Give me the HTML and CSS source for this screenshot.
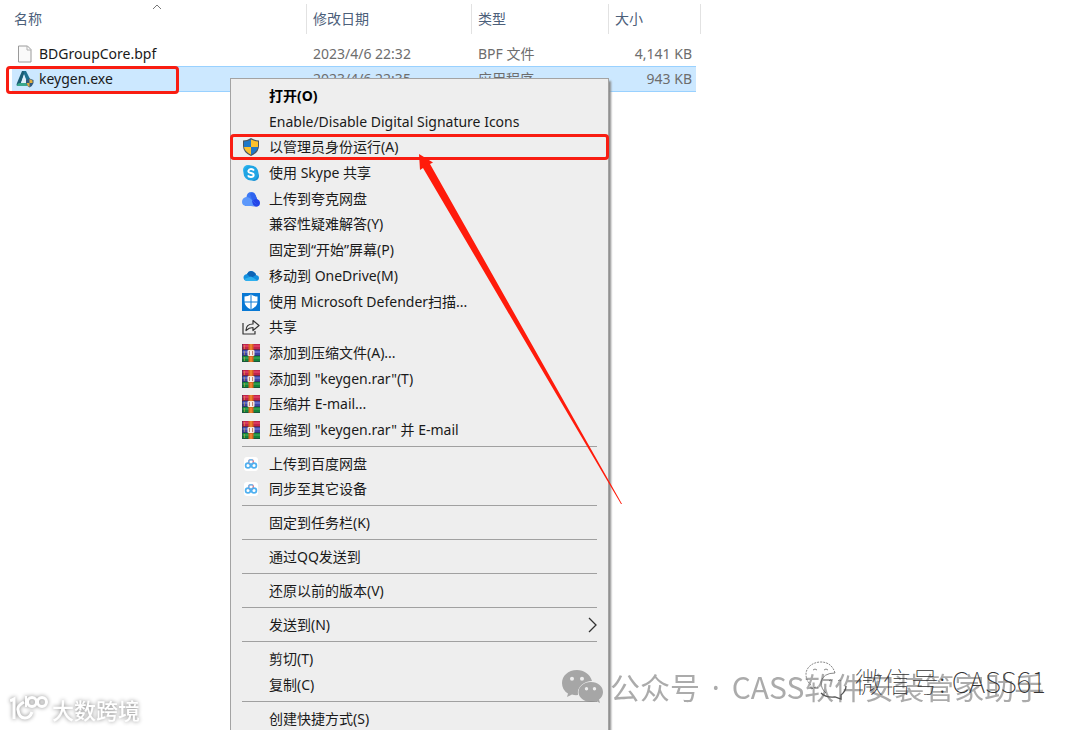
FILE: index.html
```html
<!DOCTYPE html>
<html lang="zh-CN">
<head>
<meta charset="utf-8">
<meta name="viewport" content="width=device-width, initial-scale=1">
<title>keygen.exe</title>
<link rel="stylesheet" href="styles.css">
</head>
<body>
<svg class="defs" aria-hidden="true">
  <defs>
    <symbol id="rar" viewBox="0 0 18 18">
      <rect width="18" height="6" fill="#c2244c"/><rect y="1" width="18" height="2" fill="#d83a62"/>
      <rect y="6" width="18" height="6" fill="#3c46a4"/><rect y="7" width="18" height="2" fill="#5d69c8"/>
      <rect y="12" width="18" height="6" fill="#12853a"/><rect y="13" width="18" height="2" fill="#2f9c50"/>
      <path d="M0 5.500h18M0 11.500h18M0 17.500h18M.5 0v18" stroke="#222b3c" stroke-width="1" opacity=".5"/>
      <path d="M2.500 1v4M2.500 7v4M2.500 13v4" stroke="#e8b23a" opacity=".5"/>
      <rect x="6.500" width="5" height="18" fill="#d9651f"/><path d="M9 0v6M9 13v5" stroke="#f08a35" stroke-width="1.500"/>
      <rect x="5.500" y="6" width="7" height="6" rx="1" fill="#f4e4d6"/><path d="M7.500 7v4M10.500 7v4" stroke="#c58474"/><path d="M9 7v5" stroke="#fff"/>
    </symbol>
    <symbol id="baidu" viewBox="0 0 18 18">
      <rect x="2" y="2" width="14" height="14" rx="3" fill="#fff"/>
      <circle cx="9" cy="7" r="2.400" fill="none" stroke="#ec7b85" stroke-width="1.400"/>
      <path d="M6.600 7A2.400 2.400 0 0 1 11 5.700" fill="none" stroke="#6bbcf2" stroke-width="1.400"/>
      <circle cx="6" cy="10.500" r="2.400" fill="none" stroke="#4fb0f0" stroke-width="1.700"/>
      <circle cx="12" cy="10.500" r="2.400" fill="none" stroke="#4fb0f0" stroke-width="1.700"/>
    </symbol>
  </defs>
</svg>

<main class="stage">
  <table class="files">
    <colgroup><col class="c-name"><col class="c-date"><col class="c-type"><col class="c-size"><col class="c-edge"></colgroup>
    <thead>
      <tr>
        <th class="sorted">名称<svg class="caret" viewBox="0 0 10 6" aria-hidden="true"><path d="M1 5l4-4 4 4" fill="none" stroke="#777"/></svg></th>
        <th>修改日期</th><th>类型</th><th colspan="2">大小</th>
      </tr>
    </thead>
    <tbody>
      <tr>
        <td><span class="file"><svg class="fileicon" viewBox="0 0 18 18" aria-hidden="true"><path d="M2.500 1h9l3.500 3.500V17H2.500z" fill="#fafafa" stroke="#9a9a9a"/><path d="M11 1v4h4" fill="none" stroke="#b0b0b0"/></svg>BDGroupCore.bpf</span></td>
        <td>2023/4/6 22:32</td><td>BPF 文件</td><td class="size">4,141 KB</td><td></td>
      </tr>
      <tr class="selected">
        <td><span class="file"><svg class="fileicon" viewBox="0 0 18 18" aria-hidden="true"><path d="M6 1h3L5 13l-4 3q-1-1 0-3z" fill="#1b5d75"/><path d="M7.500 1H10l5 10-4 1L8 4z" fill="#1d6f8e"/><path d="M1 16q0-3 3-3h7v3z" fill="#3aa88c"/><path d="M8 5l3 8H5z" fill="#dff0fa"/><path d="M10 10l3.500-1.500L17.500 10v3q-1 3-4 4.500Q11 16 10 13z" fill="#31597e"/><path d="M13.500 9l3 1.500V13h-3zM10.500 13h3v4q-2-1-3-4" fill="#e1ad3b"/></svg>keygen.exe</span><span class="mark mark-file"></span></td>
        <td>2023/4/6 22:35</td><td>应用程序</td><td class="size">943 KB</td><td class="edge"></td>
      </tr>
    </tbody>
  </table>

  <nav class="menu" aria-label="右键菜单">
    <div class="group group-main">
      <button class="item default">打开(O)</button>
      <button class="item">Enable/Disable Digital Signature Icons</button>
      <button class="item marked"><svg class="icon" viewBox="0 0 18 18" aria-hidden="true"><path d="M9 0q4 2.500 8 2.500V8q0 6.500-8 10Q1 14.500 1 8V2.500Q5 2.500 9 0z" fill="#4a5560"/><path d="M9 1.500V9H2V3.500Q6 3.300 9 1.500z" fill="#1f78c8"/><path d="M9 1.500V9h7V3.500Q12 3.300 9 1.500z" fill="#fbc02d"/><path d="M2 9h7v7.700Q2.500 13.500 2 9z" fill="#fbc02d"/><path d="M16 9H9v7.700Q15.500 13.500 16 9z" fill="#1f78c8"/></svg>以管理员身份运行(A)<span class="mark"></span></button>
      <button class="item"><svg class="icon" viewBox="0 0 18 18" aria-hidden="true"><circle cx="6" cy="6" r="5" fill="#29b2ee"/><circle cx="12" cy="12" r="5" fill="#1791d4"/><circle cx="9" cy="9" r="7.500" fill="#20a5e4"/><path d="M12 6.500Q11 5 9 5T6.300 7Q6.300 8.600 9 9t2.700 2.100Q11.500 13 9 13T6 11.400" fill="none" stroke="#fff" stroke-width="1.900"/></svg>使用 Skype 共享</button>
      <button class="item"><svg class="icon" viewBox="0 0 18 18" aria-hidden="true"><path d="M4.500 7Q5 2 9.500 2q3 0 4 3l2 5-5 6H3z" fill="#3c78f4"/><path d="M8 4q3-3 5.500 1l2 5q-3-2-5 1z" fill="#2f63ee"/><path d="M9 16q1-7 5-7 4 .5 4 4 0 3.500-4 3.500z" fill="#2345e8"/><path d="M0 12q0-4 4-5 3-.5 6 3t7 6H4q-4-.5-4-4z" fill="#5c98fb"/><path d="M10 10q3 4 7 5-1 1.500-3 1.500-4-1-4-6.500" fill="#2345e8"/></svg>上传到夸克网盘</button>
      <button class="item">兼容性疑难解答(Y)</button>
      <button class="item">固定到“开始”屏幕(P)</button>
      <button class="item"><svg class="icon" viewBox="0 0 18 18" aria-hidden="true"><path d="M5 7q2-4 6-2.500Q13.500 5.500 14 8q3 .5 3 3t-3 3H5q-3.500-.5-3.500-3.500T5 7z" fill="#1490df"/><path d="M5 7q2-4 6-2.500 2.500 1 3 3.500L9 11z" fill="#0f64b5"/><path d="M2 12l7-2.500 6.500 4L14 14H5q-2 0-3-2z" fill="#2eb0ee"/></svg>移动到 OneDrive(M)</button>
      <button class="item"><svg class="icon" viewBox="0 0 18 18" aria-hidden="true"><path d="M0 0h18v18H0z" fill="#0878d4"/><path d="M9 1.500q3 2 6.500 2v5q0 5-6.500 8-6.500-3-6.500-8v-5q3.500 0 6.500-2z" fill="#fff"/><path d="M9 1.500v15M2 9h14" stroke="#0878d4"/></svg>使用 Microsoft Defender扫描...</button>
      <button class="item"><svg class="icon" viewBox="0 0 18 18" aria-hidden="true"><path d="M1 5v11h12v-3M4 12.500q0-6.500 7-6.500V2.500l6 5-6 5V9.500q-4 0-7 3z" fill="none" stroke="#333" stroke-width="1.200" stroke-linejoin="round"/></svg>共享</button>
      <button class="item"><svg class="icon" aria-hidden="true"><use href="#rar"/></svg>添加到压缩文件(A)...</button>
      <button class="item"><svg class="icon" aria-hidden="true"><use href="#rar"/></svg>添加到 "keygen.rar"(T)</button>
      <button class="item"><svg class="icon" aria-hidden="true"><use href="#rar"/></svg>压缩并 E-mail...</button>
      <button class="item"><svg class="icon" aria-hidden="true"><use href="#rar"/></svg>压缩到 "keygen.rar" 并 E-mail</button>
    </div>
    <div class="group group-cloud">
      <button class="item"><svg class="icon" aria-hidden="true"><use href="#baidu"/></svg>上传到百度网盘</button>
      <button class="item"><svg class="icon" aria-hidden="true"><use href="#baidu"/></svg>同步至其它设备</button>
    </div>
    <div class="group"><button class="item">固定到任务栏(K)</button></div>
    <div class="group"><button class="item">通过QQ发送到</button></div>
    <div class="group"><button class="item">还原以前的版本(V)</button></div>
    <div class="group"><button class="item">发送到(N)<svg class="chevron" viewBox="0 0 10 16" aria-hidden="true"><path d="M1 1l7 7-7 7" fill="none" stroke="#333" stroke-width="1.300"/></svg></button></div>
    <div class="group"><button class="item">剪切(T)</button><button class="item">复制(C)</button></div>
    <div class="group"><button class="item">创建快捷方式(S)</button></div>
  </nav>

  <svg class="arrow" viewBox="0 0 204 352" aria-hidden="true"><path d="M1 1l14 8.500-3 1.500L204 351h-1L5 15l-3 2z" fill="#ff1b0b"/></svg>

  <div class="account">
    <svg class="wechat" viewBox="0 0 42 34" aria-hidden="true"><path fill="#888" fill-rule="evenodd" d="M15 0C6 0 0 6 0 13q0 7 6 10.500L5 27l5-2.500q3 1 6 .500-1-6 3.500-10T30 11C28 4 22 0 15 0zM10 6.800a2 2 0 1 1 0 4 2 2 0 0 1 0-4zm10 0a2 2 0 1 1 0 4 2 2 0 0 1 0-4z"/><path fill="#888" fill-rule="evenodd" d="M29 12c-7 0-12.500 4.500-12.500 10S22 32 29 32q3 0 5-1l4 2-1-3.500q4-3 4-7.500c0-5.500-5-10-12-10zm-4.500 5a1.700 1.700 0 1 1 0 3.400 1.700 1.700 0 0 1 0-3.400zm8 0a1.700 1.700 0 1 1 0 3.400 1.700 1.700 0 0 1 0-3.400z"/></svg>
    <span>公众号<span class="dot"> · </span>CASS软件安装管家助手</span>
  </div>

  <div class="wxid">
    <svg class="wxid-logo" viewBox="0 0 44 40" aria-hidden="true"><g fill="none" stroke="#555" stroke-width=".7"><path d="M16 32q5 5 14 4l6 2v-4q5-4 5-9" stroke-width="1.300"/><path d="M30 12C28 5 23 1 16 1 7 1 1 7 1 13q0 7 5 11v4l5-2h4" stroke-dasharray="2 1"/><path d="M30 12q-12 0-14 9 0 7 5 11M8 9q2-2 4 0M19 9q2-2 4 0M24 20q1-2 3 0M33 20q1-2 3 0"/></g></svg>
    <span>微信号: CASS61</span>
  </div>

  <div class="brand">
    <svg class="brand-logo" viewBox="0 0 40 28" aria-hidden="true"><g fill="none" stroke="#fff" stroke-width="3"><path d="M0 6l4-2v20M14 7q-7 4-6 8 1 8 7 8 5 0 7-6"/><circle cx="22" cy="7" r="4.500"/><circle cx="32" cy="7" r="4.500"/><path d="M16 1v11" stroke-width="2"/></g></svg>
    <span>大数跨境</span>
  </div>
</main>
</body>
</html>
```
FILE: styles.css
```css
* { box-sizing: border-box; }

body {
  margin: 0;
  background: #fff;
  color: #1a1a1a;
  font: 14px/20px "Noto Sans", "Noto Sans CJK SC", sans-serif;
}

.defs { position: absolute; width: 0; height: 0; }

.stage {
  position: relative;
  height: 100vh;
  padding: 4px 0 0 12px;
  overflow: hidden;
}

/* File list */
.files { width: 689px; table-layout: fixed; border-collapse: separate; border-spacing: 0; color: #6d6d6d; }
.c-name { width: 295px; }
.c-date { width: 165px; }
.c-type { width: 137px; }
.c-size { width: 87px; }
.c-edge { width: 5px; }
.files th {
  position: relative;
  height: 30px;
  padding: 0 6px;
  border-right: 1px solid #e2e2e2;
  color: #4c607a;
  font-weight: 400;
  text-align: left;
}
.files th.sorted { padding-left: 2px; }
.files tbody::before { content: ""; display: block; height: 7px; }
.files td { position: relative; height: 25px; padding: 0 6px; white-space: nowrap; }
.files td:first-child { padding-left: 4px; }
.files td.size { padding: 0 4px; text-align: right; }
.caret { position: absolute; top: 0; left: 140px; width: 10px; height: 6px; }
.file { display: flex; align-items: center; gap: 5px; color: #1a1a1a; }
.fileicon { width: 18px; height: 18px; }
.files .selected td { height: 26px; }
.selected td:not(.edge) { background: #cce8ff; box-shadow: inset 0 1px #99d1ff, inset 0 -1px #99d1ff; }

.mark { position: absolute; inset: 0 -1px; border: 3px solid #f91d12; border-radius: 4px; }
.mark-file { inset: 0 auto -2px -6px; width: 173px; }

/* Context menu */
.menu {
  position: absolute;
  top: 78px;
  left: 230px;
  width: 379px;
  padding: 4px 0;
  border: 1px solid #a3a3a3;
  background: #eee;
  box-shadow: 2px 3px 2px #8a8a8a;
}
.group + .group::before {
  content: "";
  display: block;
  height: 1px;
  margin: 3px 11px 4px;
  background: #a0a0a0;
}
.group-main,
.group-cloud { display: grid; grid-auto-rows: 1fr; min-height: 360px; }
.group.group-cloud { grid-template-rows: auto; min-height: 59px; }
.item {
  position: relative;
  display: flex;
  align-items: center;
  width: 100%;
  height: 26px;
  padding: 0 0 0 38px;
  border: 0;
  background: none;
  color: #1a1a1a;
  font: inherit;
  text-align: left;
  white-space: nowrap;
}
.group-main .item,
.group-cloud .item { height: auto; }
.default { color: #000; font-weight: 700; }
.icon { width: 18px; height: 18px; margin: 0 9px 0 -27px; }
.chevron { width: 10px; height: 16px; margin: 0 10px 0 auto; }

.arrow { position: absolute; top: 153px; left: 418px; width: 204px; height: 352px; }

/* Watermarks */
.account {
  position: absolute;
  top: 667px;
  left: 562px;
  display: flex;
  align-items: center;
  gap: 6px;
  color: #888;
  font: 30px/38px "Noto Sans CJK SC", sans-serif;
  white-space: nowrap;
  opacity: .7;
}
.account .wechat { width: 42px; height: 34px; }
.dot { padding: 0 4px; font-family: "Noto Sans", sans-serif; }
.wxid {
  position: absolute;
  top: 659px;
  left: 805px;
  display: flex;
  align-items: center;
  gap: 6px;
  color: #333;
  font: 100 28px/44px "Noto Sans CJK SC", sans-serif;
  white-space: nowrap;
}
.wxid-logo { width: 44px; height: 40px; }
.brand {
  position: absolute;
  top: 693px;
  left: 10px;
  display: flex;
  align-items: center;
  gap: 2px;
  color: #fff;
  font: 500 22px/32px "Noto Sans CJK SC", sans-serif;
  white-space: nowrap;
  filter: drop-shadow(0 0 2px #888);
}
.brand-logo { width: 40px; height: 28px; }
```
